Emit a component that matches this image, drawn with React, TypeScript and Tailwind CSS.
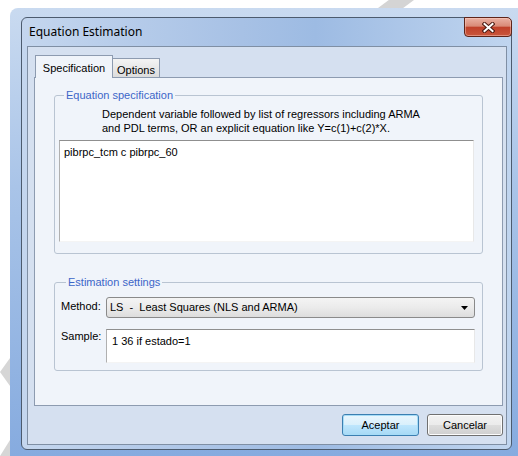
import React from "react";

const ui = { fontFamily: '"Liberation Sans", Arial, sans-serif' };

function CloseGlyph() {
	return (
		<svg width="13" height="11" viewBox="0 0 13 11">
			<path d="M2.5 2 L10.5 9 M10.5 2 L2.5 9" stroke="#4a1a12" strokeWidth="4" strokeLinecap="square" />
			<path d="M2.5 2 L10.5 9 M10.5 2 L2.5 9" stroke="#ffffff" strokeWidth="2" strokeLinecap="square" />
		</svg>
	);
}

function Fieldset({ title, className, children }: { title: string; className?: string; children: React.ReactNode }) {
	return (
		<fieldset className={`rounded-[3px] border border-[#b9c4d2] ${className ?? ""}`}>
			<legend className="ml-[5px] px-[2px] text-[11px] leading-[14px] text-[#3c66c8]">{title}</legend>
			{children}
		</fieldset>
	);
}

export default function App() {
	return (
		<div className="relative h-[456px] w-[518px] overflow-hidden bg-white pl-[10px] pt-[8px] text-[#000]" style={ui}>
			{/* desktop behind the dialog */}
			<div className="absolute left-[378px] top-0 h-[8px] w-[36px] bg-[#d4d4d4] [clip-path:polygon(30%_0,100%_0,70%_100%,0_100%)]" />
			<div className="absolute left-0 top-[358px] h-[28px] w-[10px] bg-[#d6d6d6] [clip-path:polygon(100%_0,100%_100%,0_50%)]" />
			<div className="absolute left-0 top-[440px] h-[16px] w-[10px] bg-[#d6d6d6] [clip-path:polygon(100%_0,100%_100%,0_100%)]" />

			{/* aero glass frame */}
			<div className="h-[448px] w-[508px] rounded-tl-[8px] bg-[linear-gradient(180deg,#c9daf0_0%,#a9c4e8_40%,#86abdf_100%)] pl-[11px] pt-[9px]">
				<div className="relative flex h-[433px] w-[491px] flex-col rounded-[6px] border border-[#4c5b6e] bg-[linear-gradient(90deg,#c4d6ee_0%,#a7c1e5_45%,#9dbbe3_60%,#c0d5ef_100%)] pl-[5px] pr-[4px]">
					<div className="flex h-[28px] items-center pl-[2px] text-[12px] text-[#000]" style={{ fontFamily: '"Noto Sans", "Liberation Sans", sans-serif' }}>
						Equation Estimation
					</div>
					<button className="absolute right-[-1px] top-[-1px] flex h-[20px] w-[48px] items-center justify-center rounded-b-[4px] rounded-tr-[5px] border border-[#5e2419] bg-[linear-gradient(180deg,#eab1a3_0%,#d98a77_45%,#c0412a_52%,#c9563c_100%)] shadow-[inset_0_0_0_1px_rgba(255,210,200,0.45)]">
						<CloseGlyph />
					</button>

					{/* client area */}
					<div className="flex h-[399px] w-[480px] flex-col border border-[#7f8fa4] bg-[#d5e0f0] pt-[8px]">
						{/* tabs */}
						<div className="relative z-10 -mb-px flex h-[23px] items-end pl-[7px]">
							<div className="flex h-[23px] w-[78px] items-start justify-center border border-b-0 border-[#8d9bb0] bg-[#f0f4fa] pt-[4px] text-[11px]">
								Specification
							</div>
							<div className="flex h-[20px] w-[47px] items-start justify-center border border-l-0 border-b-[#8d9bb0] border-[#8d9bb0] bg-[linear-gradient(180deg,#f4f4f4,#dcdcdc)] pt-[3px] text-[11px]">
								Options
							</div>
						</div>
						<div className="ml-[6px] flex h-[329px] w-[469px] flex-col border border-[#8d9bb0] bg-[#f0f4fa] pl-[19px] pt-[10px]">
							<Fieldset title="Equation specification" className="h-[166px] w-[429px] px-[4px]">
								<div className="mt-[5px] pl-[43px] text-[11px] leading-[14px]">
									<div>Dependent variable followed by list of regressors including ARMA</div>
									<div>and PDL terms, OR an explicit equation like Y=c(1)+c(2)*X.</div>
								</div>
								<div className="mt-[5px] h-[102px] w-[415px] border border-b-[#f4f4f4] border-l-[#b0b0b0] border-r-[#e8e8e8] border-t-[#8f8f8f] bg-white px-[4px] pt-[4px] text-[11px] leading-[14px]">
									pibrpc_tcm c pibrpc_60
								</div>
							</Fieldset>

							<Fieldset title="Estimation settings" className="mt-[21px] h-[96px] w-[429px] pl-[6px]">
								<div className="mt-[8px] flex items-start">
									<div className="w-[45px] pt-[2px] text-[11px] leading-[14px]">Method:</div>
									<div className="flex h-[21px] w-[369px] items-center justify-between rounded-[3px] border border-[#8a8a8a] bg-[linear-gradient(180deg,#f4f4f4_0%,#ebebeb_50%,#dddddd_100%)] pl-[3px] pr-[6px] text-[11px]">
										<span className="whitespace-pre">LS  -  Least Squares (NLS and ARMA)</span>
										<svg width="7" height="4" viewBox="0 0 7 4">
											<path d="M0 0 H7 L3.5 4 Z" fill="#000" />
										</svg>
									</div>
								</div>
								<div className="mt-[11px] flex items-start">
									<div className="w-[45px] text-[11px] leading-[14px]">Sample:</div>
									<div className="h-[34px] w-[369px] border border-b-[#f4f4f4] border-l-[#b0b0b0] border-r-[#e8e8e8] border-t-[#8f8f8f] bg-white px-[5px] pt-[4px] text-[11px] leading-[14px]">
										1 36 if estado=1
									</div>
								</div>
							</Fieldset>
						</div>

						{/* buttons */}
						<div className="mt-[8px] flex w-[475px] justify-end gap-[8px]">
							<button className="h-[22px] w-[77px] rounded-[3px] border border-[#3c7fb1] bg-[linear-gradient(180deg,#eaf6fd_0%,#d9f0fc_50%,#bee6fd_51%,#a7d9f5_100%)] text-[11px] shadow-[inset_0_0_0_1px_#a6dcf7]">
								Aceptar
							</button>
							<button className="h-[22px] w-[76px] rounded-[3px] border border-[#707070] bg-[linear-gradient(180deg,#f2f2f2_0%,#ebebeb_50%,#dddddd_51%,#cfcfcf_100%)] text-[11px] shadow-[inset_0_0_0_1px_#fcfcfc]">
								Cancelar
							</button>
						</div>
					</div>
				</div>
			</div>
		</div>
	);
}
